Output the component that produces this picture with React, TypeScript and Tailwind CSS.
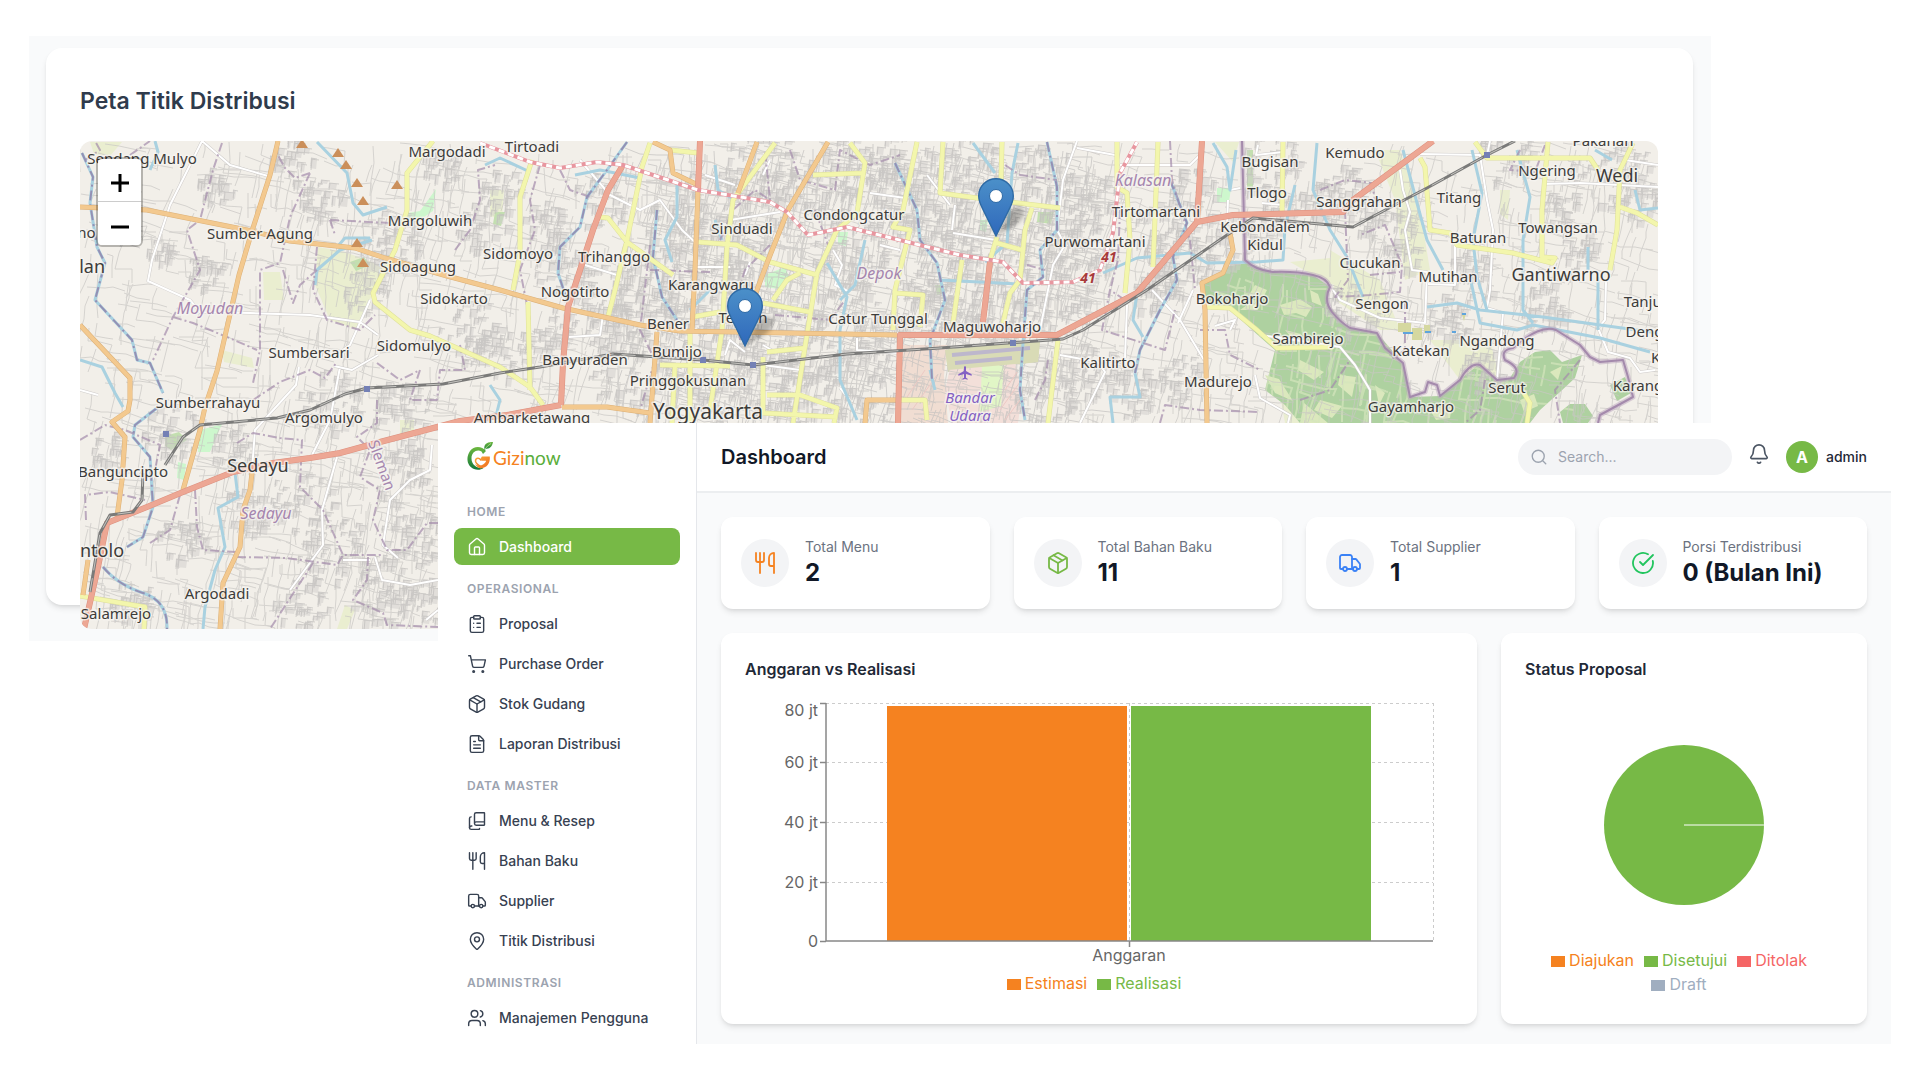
// src/App.tsx
import React from 'react';
import {
  Bell,
  BookCopy,
  CircleCheckBig,
  ClipboardList,
  FileText,
  House,
  MapPin,
  Package,
  Search,
  ShoppingCart,
  Truck,
  Users,
  Utensils,
  type LucideIcon,
} from 'lucide-react';
import { MdLocalAirport } from 'react-icons/md';

/* ---------- Map data ---------- */

type Label = [string, number, number];

const villages: Label[] = [
  ['Sendang Mulyo', 142, 164], ['Sumber Agung', 260, 239], ['Margodadi', 447, 157], ['Margoluwih', 430, 226],
  ['Sidoagung', 418, 272], ['Sidokarto', 454, 304], ['Sumbersari', 309, 358], ['Sidomulyo', 414, 351],
  ['Sumberrahayu', 208, 408], ['Argomulyo', 324, 423], ['Ambarketawang', 532, 423], ['Tirtoadi', 532, 152],
  ['Sinduadi', 742, 234], ['Condongcatur', 854, 220], ['Sidomoyo', 518, 259], ['Trihanggo', 614, 262],
  ['Nogotirto', 575, 297], ['Karangwaru', 711, 290], ['Terban', 743, 323], ['Bener', 668, 329],
  ['Catur Tunggal', 878, 324], ['Banyuraden', 585, 365], ['Bumijo', 677, 357], ['Pringgokusunan', 688, 386],
  ['Tirtomartani', 1156, 217], ['Purwomartani', 1095, 247], ['Maguwoharjo', 992, 332], ['Kalitirto', 1108, 368],
  ['Madurejo', 1218, 387], ['Bokoharjo', 1232, 304], ['Kebondalem', 1265, 232], ['Kidul', 1265, 250],
  ['Tlogo', 1267, 198], ['Bugisan', 1270, 167], ['Kemudo', 1355, 158], ['Sanggrahan', 1359, 207],
  ['Titang', 1459, 203], ['Ngering', 1547, 176], ['Pakahan', 1603, 146], ['Towangsan', 1558, 233],
  ['Baturan', 1478, 243], ['Cucukan', 1370, 268], ['Mutihan', 1448, 282], ['Sengon', 1382, 309],
  ['Sambirejo', 1308, 344], ['Katekan', 1421, 356], ['Ngandong', 1497, 346], ['Serut', 1507, 393],
  ['Gayamharjo', 1411, 412], ['Banguncipto', 123, 477], ['Argodadi', 217, 599], ['Salamrejo', 116, 619],
  ['Tanjung', 1652, 307], ['Dengkeng', 1662, 337], ['Karangasem', 1657, 391], ['Kragilan', 1680, 363], ['Bono', 77, 238],
];

const towns: Label[] = [
  ['Wedi', 1617, 182], ['Gantiwarno', 1561, 281], ['Sedayu', 258, 472], ['Sentolo', 92, 557], ['Nanggulan', 58, 273],
];

const districts: Label[] = [['Moyudan', 210, 314], ['Depok', 879, 279], ['Kalasan', 1143, 186], ['Sedayu', 266, 519]];

const orangeRoads = [
  'M278 141L270 175 252 231 239 275 217 371 205 407 200 430 183 490',
  'M80 207L147 210 252 231 290 241 355 248 385 258 447 276 500 290 563 308 640 325 680 331 897 335',
  'M80 325L130 378 130 400 128 411 112 422 125 437 122 480 117 517',
  'M698 190L695 270 692 330',
  'M757 142L738 193',
  'M828 142L788 210 767 263 747 317',
  'M657 332L650 423',
  'M562 407L607 407 650 413',
  'M653 142L670 150 673 173 698 185',
  'M1230 233L1233 250 1223 273 1202 283 1205 310 1207 423',
  'M865 423L867 400 900 400',
  'M252 473L250 490 243 510 240 547 223 583 220 629',
  'M88 560L83 595',
];

const redRoads = [
  'M84 629L98 567 107 523 147 507 183 492 233 472 273 463 310 458 340 453 380 442 460 421 507 415 561 405',
  'M623 165L608 190 593 230 568 307 563 363 561 405',
  'M700 141L698 190',
  'M898 423L900 335 1057 335 1137 293 1197 222 1233 215 1343 212 1353 200 1433 141',
  'M1202 141L1197 222',
  'M990 262L983 322',
];

const yellowRoads = [
  'M433 141L407 173 407 210 395 250 373 293 375 302 410 330 430 336 500 367 530 387 543 405',
  'M532 160L520 197 520 253 513 290',
  'M528 302L530 390',
  'M650 143L642 167 627 240 615 290 608 317',
  'M600 217L608 218 627 242 673 275',
  'M698 242L737 245 770 262 817 275',
  'M775 143L733 200 727 247 722 330 710 410',
  'M670 150L698 153',
  'M692 317L720 312',
  'M763 303L810 312M773 300L787 280 800 273',
  'M837 230L817 273 805 347 793 423',
  'M850 143L865 163 857 213 837 230M813 175L863 173',
  'M917 142L903 210 893 227 910 230 895 290 893 330M895 293L923 295 920 327',
  'M943 142L940 193 977 198 1060 208',
  'M1002 142L1001 180M997 237L990 260M997 243L1022 250',
  'M1032 208L1025 230 1020 280 1010 293 1003 323',
  'M962 260L953 323',
  'M1117 142L1117 187 1127 193 1130 240 1125 293',
  'M1158 142L1153 267M1283 142L1282 212',
  'M1058 340L1048 423',
  'M1207 307L1230 308 1257 330 1277 348 1333 347',
  'M1420 158L1425 167 1430 230 1450 233 1457 245 1513 253 1552 263 1555 258 1542 257 1542 210 1548 142',
  'M1475 142L1487 158 1590 158 1598 170',
  'M1633 143L1620 170 1617 230 1610 270M1620 207L1637 213 1658 225',
  'M1522 390L1530 403 1527 423',
  'M80 596L145 607 144 629',
  'M660 365L730 366M763 357L763 413 837 417M767 395L800 395 837 408 834 423M767 352L805 348',
  'M900 400L925 400 927 420M690 330L690 423M675 365L672 423',
];

const whiteRoads = [
  'M202 141L170 205 152 260 148 281 190 300 200 312 250 313 310 315 360 322 378 335',
  'M202 141L230 165 268 176',
  'M370 300L350 345 340 352M378 355L352 370 334 366M299 367L296 385 255 430 252 470',
  'M340 367L330 420 312 455M337 457L322 510 323 545 290 590',
  'M580 160L610 195 640 210 660 200 682 230 698 245M585 265L617 275M569 337L600 335 603 315',
  'M705 175L735 185M770 160L763 175M730 220L780 212M697 267L730 267M745 275L750 262',
  'M725 355L730 340 745 352M763 345L775 352M763 365L800 370M857 338L857 350 898 353M840 388L850 400',
  'M870 193L905 198M833 250L842 265 835 285 850 292M880 245L900 250M927 175L950 205',
  'M1077 141L1063 180 1057 230 1065 245 1053 265 1040 330M1060 355L1098 362 1105 372 1080 423',
  'M1077 148L1115 155M1120 165L1190 165 1200 155M953 233L996 240M955 205L952 230',
  'M1127 305L1125 358M1152 290L1180 320 1204 360M1178 323L1193 290',
  'M1258 145L1256 155 1283 152M1283 205L1262 203M1230 190L1240 188M1227 225L1228 200',
  'M1400 170L1403 190 1410 212 1405 230 1412 270 1427 272 1425 323 1380 318 1340 300 1333 290',
  'M1420 154L1480 155 1487 200 1493 230 1490 290 1487 308 1503 313 1497 380',
  'M1455 245L1455 285 1428 284M1490 141L1487 155M1542 184L1580 183 1658 187M1625 160L1658 165',
  'M1606 282L1605 320 1598 328 1608 352 1630 358 1640 372 1655 370',
  'M1230 330L1235 320 1215 326M1260 335L1295 340 1340 347 1355 365 1370 390 1370 423',
  'M1255 375L1260 398 1290 415 1288 423M398 558L383 545 390 500 410 480 430 470 432 445',
  'M375 557L382 580 410 585 438 580M343 560L370 560M426 620L438 610M80 390L98 395',
];

// rivers that carry an administrative border on top
const borderRivers = [
  'M82 153L93 177 90 203 97 247 105 263 95 300 132 340 137 360 150 363 163 393',
  'M157 408L135 425 133 437 150 457 153 507 143 537 127 547M103 567Q118 585 143 593T167 629',
  'M627 142L607 170 587 197 580 227 560 247 558 273 567 300',
  'M657 210L653 257 662 297 677 320',
  'M895 163L917 210 920 240 937 263 945 300 930 340 932 380',
  'M1047 142L1057 187 1057 230 1040 250 1043 277 1027 290 1023 343 1020 390 1025 420',
  'M1170 180L1187 223 1173 257 1177 280 1160 310 1140 350 1135 373',
];

const rivers = [
  'M317 142L347 173 353 203 363 215 387 207',
  'M372 240L340 250 317 270 315 285M370 238L345 238 338 246',
  'M80 360L102 367 115 393 123 407M155 141L158 152 150 170',
  'M235 473L238 497 218 508 225 547 215 570 205 607 203 629',
  'M677 185L677 217 665 240 672 262M575 175L600 170 640 178',
  'M827 263L847 297 840 330 840 380 857 420M865 240L855 285 840 300',
  'M973 143L995 173M1018 143L1012 173 1007 243 985 262M940 280L1020 284',
  'M1103 273L1137 258 1190 253 1207 263 1257 262 1283 260 1285 227 1295 185',
  'M1213 143L1227 167 1230 190 1236 150',
  'M1135 373L1140 397 1110 397 1113 423',
  'M1137 293L1133 320 1143 337M1317 143L1313 190 1330 230 1347 257 1363 297',
  'M1403 150L1417 203 1427 240 1443 270M1472 150L1482 193 1473 240 1477 277 1487 310',
  'M1517 150L1530 197 1523 240 1523 310 1533 323M1427 307L1457 303 1480 310 1543 317 1658 333',
  'M1470 277L1480 323 1517 330 1533 325 1600 338 1650 352M1588 247L1588 270M1598 277L1598 330',
  'M1635 190L1640 210 1658 208M1595 150L1612 160M490 385L500 400 495 420M485 165L500 158 530 172',
  'M715 165L718 190 735 200M715 220L722 240M690 310L710 290M930 370L935 390',
];

const borders = [
  'M222 143L213 170 200 220 187 230 200 270 173 317 153 360',
  'M310 173L290 217 280 263 260 270 260 350 253 383M310 173L295 178 285 168 275 150',
  'M173 317L193 323 227 337 257 350M317 247L313 290 327 320 360 330 375 315',
  'M283 270L293 303 300 285 317 270M330 220L390 223M330 220L335 235',
  'M377 363L400 380 420 370 410 400 437 400 440 370 465 370 460 345M253 400L280 382 310 370 325 378 337 362',
  'M377 400L377 423 357 437 370 450 360 477 380 490 373 520 387 550 407 550 427 523 438 523',
  'M237 443L253 433 280 438 302 440 300 487 323 510 343 555 382 555',
  'M237 557L287 558 337 565 343 555M313 563L270 629M195 490L197 527 203 550 237 552',
  'M368 557L367 580 353 600 383 613 387 625 438 627M80 440L105 425 125 430 160 445 155 470',
  'M86 520L85 495 110 492 145 500M150 543L170 530 180 495M455 250L470 230 480 200 478 170 495 165',
  'M540 165L530 200 535 230 520 270 530 320M560 170L570 190 590 197M650 245L640 330 655 360 640 410',
  'M720 240L733 210 755 190 770 200 765 150M770 245L745 270 735 300 740 340M650 270L710 272',
  'M790 150L800 180 835 190 840 150 870 165 900 155M775 315L830 320 845 300M830 250L815 210',
  'M1005 165L1020 175 1057 180M1125 300L1110 290 1102 330 1165 350 1175 310M1027 265L1045 270',
  'M1170 141L1172 180 1190 240 1195 290M1120 210L1118 260 1110 290M1035 400L1045 380 1048 360',
  'M1200 330L1225 330 1230 355 1260 370M1160 423L1165 405 1200 410 1260 412M1320 190L1345 180 1372 183 1375 200',
  'M1345 210L1348 280 1335 297 1370 295 1400 292 1402 265 1385 225 1360 235M1370 275L1400 272',
  'M1405 300L1405 350 1390 360M1300 400L1330 390 1350 360M1580 360L1555 390 1560 423M1485 380L1480 410 1465 423',
  'M1520 150L1510 170 1535 172 1545 145M85 160L100 150 95 141M130 155L150 141',
];

const ridge =
  'M1242 141L1245 260Q1255 270 1273 272Q1295 271 1313 275Q1327 278 1330 287Q1323 300 1332 312Q1340 322 1350 328L1377 333 1385 348 1403 363 1410 397 1425 392 1428 382 1437 385 1440 396 1460 380Q1470 362 1480 365L1497 380 1514 378Q1522 368 1505 360 1500 350 1513 348Q1540 324 1556 330L1580 345 1590 357 1600 362 1623 360 1628 377 1633 397 1600 415 1598 423';

const forest =
  'M1203 283L1230 266 1247 263 1273 272 1313 275 1330 287 1327 303 1347 327 1377 333 1403 363 1410 397 1440 396 1478 365 1497 380 1510 378 1520 362 1535 352 1550 350 1562 362 1582 355 1575 378 1560 392 1540 410 1530 423 1300 423 1285 405 1265 390 1270 370 1275 350 1260 337 1230 310 1207 303zM1560 412l10 -8 15 0 8 12 -5 7 -25 0zM1610 385l15 -8 6 16 -14 8z';

const railway = [
  'M90 592L100 533 110 515 133 512 142 500 143 473',
  'M165 465L183 437 200 425 277 418 310 410 345 394 367 388 443 384 500 373 540 367 613 354 703 360 753 365 847 354 940 348 1063 339 1083 330 1147 290 1227 235 1253 218 1353 227 1427 188 1487 155 1515 141',
];

const tollRoad =
  'M480 143L530 162 560 168 597 162 623 165 698 190 770 202 787 212 808 235 847 227 960 255 1003 262 1023 283 1073 282 1100 270 1113 233 1120 173 1137 142';

const peaks = [[302, 144], [338, 153], [346, 165], [357, 183], [363, 201], [397, 185], [357, 243], [363, 263]];
const stations = [[367, 389], [166, 434], [703, 360], [753, 365], [1013, 343], [1487, 155]];

// x, y, radius of the built-up areas
const settlements = [
  [290, 160, 14], [215, 185, 12], [320, 200, 14], [388, 240, 20], [365, 290, 14], [205, 270, 12], [160, 250, 8], [480, 225, 16],
  [545, 225, 16], [500, 190, 14], [470, 330, 20], [440, 165, 12], [560, 270, 16], [600, 290, 20], [610, 330, 18], [640, 300, 24],
  [630, 370, 26], [670, 230, 20], [710, 210, 26], [760, 165, 24], [730, 250, 24], [790, 190, 22], [660, 280, 22], [720, 300, 26],
  [700, 350, 30], [740, 390, 32], [800, 380, 34], [790, 340, 28], [850, 320, 26], [850, 250, 24], [880, 200, 28], [930, 210, 26],
  [930, 300, 26], [860, 380, 26], [900, 165, 22], [840, 165, 20], [970, 170, 22], [965, 230, 22], [1040, 170, 20], [1030, 240, 24],
  [970, 290, 24], [1060, 290, 24], [1000, 310, 20], [1090, 200, 18], [1080, 250, 22], [1150, 230, 18], [1190, 190, 16], [1180, 260, 24],
  [1220, 240, 20], [1160, 290, 18], [1090, 370, 18], [1130, 390, 16], [1180, 380, 16], [1045, 390, 20], [1270, 160, 18], [1265, 210, 20],
  [1320, 200, 14], [1385, 225, 18], [1350, 310, 18], [1400, 255, 12], [1500, 150, 20], [1610, 165, 26], [1640, 200, 14], [1560, 205, 12],
  [1470, 275, 16], [1540, 305, 16], [1575, 250, 14], [1445, 315, 16], [1480, 370, 14], [1345, 190, 16], [170, 430, 18], [230, 445, 14],
  [300, 500, 20], [240, 510, 16], [330, 545, 22], [400, 470, 22], [410, 540, 20], [330, 400, 20], [400, 410, 20], [180, 540, 16],
  [130, 600, 14], [300, 600, 18], [110, 450, 12], [380, 590, 22], [420, 600, 16], [500, 350, 18], [550, 330, 18], [600, 200, 18],
];

const randomFrom = (seed: number) => () => {
  seed = (seed * 1664525 + 1013904223) % 4294967296;
  return seed / 4294967296;
};

// Loose lanes that wander in two main directions
const lanes = (seed: number, x0: number, x1: number, y0: number, y1: number, count: number) => {
  const rnd = randomFrom(seed);
  let d = '';
  for (let i = 0; i < count; i++) {
    let x = x0 + rnd() * (x1 - x0);
    let y = y0 + rnd() * (y1 - y0);
    let angle = rnd() > 0.42 ? 1.74 : 0.17;
    d += `M${x.toFixed(0)} ${y.toFixed(0)}`;
    const steps = 2 + Math.floor(rnd() * 4);
    for (let s = 0; s < steps; s++) {
      const bend = angle + (rnd() - 0.5) * 0.5;
      const len = 6 + rnd() * 12;
      x += Math.cos(bend) * len;
      y += Math.sin(bend) * len;
      d += `L${x.toFixed(0)} ${y.toFixed(0)}`;
      if (rnd() > 0.75) angle = 1.91 - angle;
    }
  }
  return d;
};

const blocks = () => {
  const rnd = randomFrom(77);
  let fill = '';
  let grid = '';
  settlements.forEach(([cx, cy, r]) => {
    for (let i = 0; i < r * 2; i++) {
      const a = rnd() * 6.28;
      const dist = Math.sqrt(rnd()) * r * 1.6;
      const x = Math.round(cx + Math.cos(a) * dist);
      const y = Math.round(cy + Math.sin(a) * dist);
      const w = 3 + Math.round(rnd() * 6);
      const h = 3 + Math.round(rnd() * 6);
      fill += `M${x} ${y}l${w} 1l-1 ${h}l${-w} -1z`;
      grid += `M${x} ${y}l${w + 2} 1M${x + 1} ${y}l-1 ${h + 2}`;
    }
  });
  return { fill, grid };
};

const laneShapes = lanes(11, 80, 1658, 141, 423, 1500) + lanes(53, 80, 438, 423, 629, 330);
const denseLanes = lanes(29, 620, 1090, 141, 423, 700);
const forestLanes = lanes(91, 1210, 1560, 270, 420, 120);
const settlementShapes = blocks();

const Lines: React.FC<{ paths: string[]; color: string; width: number; dash?: string; opacity?: number }> = ({
  paths,
  color,
  width,
  dash,
  opacity,
}) => (
  <path
    d={paths.join('')}
    fill="none"
    stroke={color}
    strokeWidth={width}
    strokeDasharray={dash}
    strokeLinejoin="round"
    opacity={opacity}
  />
);

const Marker: React.FC<{ x: number; y: number }> = ({ x, y }) => (
  <g transform={`translate(${x - 18} ${y - 59})`}>
    <path d="M18 58L30 34Q40 24 46 32Q48 40 36 48Z" fill="#000" opacity="0.25" filter="url(#markerShadow)" />
    <path
      d="M18 .7C8.300.7.7 8.300.7 18c0 5 2 9 4 13L18 58l13.300-27c2-4 4-8 4-13C35.300 8.300 27.700.7 18 .7z"
      fill="url(#markerFill)"
      stroke="#2e6aa5"
      strokeWidth="1.4"
    />
    <circle cx="18" cy="18" r="6.500" fill="#fff" stroke="#2e6aa5" strokeWidth="1" />
  </g>
);

const DistributionMap: React.FC = () => (
  <svg
    viewBox="80 141 1578 488"
    preserveAspectRatio="xMinYMin slice"
    className="block h-full w-full font-['Noto_Sans',sans-serif]"
    role="img"
    aria-label="Peta"
  >
    <defs>
      <linearGradient id="markerFill" x1="0" y1="0" x2="0" y2="1">
        <stop offset="0" stopColor="#4b90c9" />
        <stop offset="1" stopColor="#2f68bb" />
      </linearGradient>
      <filter id="markerShadow" x="-30%" y="-30%" width="160%" height="160%">
        <feGaussianBlur stdDeviation="2" />
      </filter>
      <clipPath id="forestArea">
        <path d={forest} />
      </clipPath>
    </defs>
    <rect x="80" y="141" width="1578" height="488" fill="#f2efe9" />

    {/* fields */}
    <path
      d="M318 247L345 252 372 262 385 270 372 295 358 330 330 320 315 285zM263 272l17 0 4 28 -20 0zM222 350l30 8 2 10 -30 -6zM90 142l32 0 -12 14 -16 -2zM1215 142h24l-6 20zM1375 150l25 0 20 60 10 60 -25 10 -10 -80zM1330 250l50 30 20 50 -20 0 -45 -30zM1430 340l60 0 10 40 -40 0zM1290 262l40 -4 15 30 -20 -6zM345 605l10 5 -8 19 -10 0zM400 420l14 0 0 14 -14 0zM1500 190l10 0 -2 30 -8 -6zM490 190l14 0 -2 30 -12 -4zM1280 395l25 10 10 18 -30 0z"
      fill="#eaeed0"
    />
    <path
      d="M408 213l12 -2 16 -22 -3 22 -12 8 -13 0zM200 430l22 -6 -12 28 -12 0zM178 462l8 2 -2 16 -7 -2zM765 275l20 -8 6 14 -12 8 -14 -2zM838 232l10 0 -2 14 -8 -2zM1217 188l14 0 -2 14 -12 0zM980 220l8 0 -2 12 -6 -2z"
      fill="#cdf7cd"
    />
    <path d="M165 436l14 -4 8 8 -16 10 -6 -4zM350 262l14 -5 6 8 -14 6zM495 212l10 0 -4 14 -8 -2zM1038 212l16 0 -3 12 -14 -2zM935 285l8 0 2 8 -8 2zM1247 150l6 0 0 40 -6 0z" fill="#c3dfb0" />
    <path d={forest} fill="#aed1a0" />
    <path
      d="M1255 285l12 5 -4 8 -14 -3zM1280 305l20 -6 12 8 -6 10 -10 -4 -12 2zM1310 290l8 4 4 12 -10 -4zM1285 330l16 4 -6 8zM1265 375l14 4 14 22 -18 -8zM1300 360l24 12 -10 8 -16 -10zM1340 375l16 2 -4 20 -14 -12zM1375 385l10 8 -6 12zM1320 400l22 6 -10 12 -18 -8zM1430 410l22 -6 -2 14 -14 2zM1300 423l4 -20 24 20zM1520 400l14 -6 4 12 -14 6zM1240 310l14 -10 4 10zM1550 372l12 -6 -4 14z"
      fill="#dbe8bd"
    />
    <path d={forestLanes} fill="none" stroke="#d4e6bc" strokeWidth="2" clipPath="url(#forestArea)" opacity="0.7" />

    {/* airport */}
    <path d="M945 348L1040 340 1038 362 948 372z" fill="#d9dbb6" />
    <path d="M900 345l48 0 -4 30 4 48 -48 0z" fill="#f0ddd2" />
    <path d="M950 368L1015 362 1022 395 1018 423 952 423 945 390z" fill="#f3dfd9" />
    <path d="M982 366l22 -2 -3 42 -21 6z" fill="#e1f6c6" />

    {/* streets */}
    <path d={settlementShapes.fill} fill="#d0cecc" opacity="0.5" />
    <g fill="none" opacity="0.7">
      <path d={laneShapes} stroke="#c9c7c4" />
      <path d={denseLanes} stroke="#c3c1bf" />
      <path d={settlementShapes.grid} stroke="#c0bebc" />
    </g>

    <path d="M945 350L1040 341 1038 362 948 370z" fill="#d9dbb6" />
    <path d="M952 355L1030 348M955 363L1012 358" stroke="#bdb7cc" strokeWidth="4" />
    <path d="M1005 390l12 -18M1000 410l20 -28M1005 420l15 -20M905 400l20 -30M912 410l25 -35" stroke="#ecc9c4" fill="none" />

    <Lines paths={whiteRoads} color="#cfccca" width={3} />
    <Lines paths={whiteRoads} color="#ffffff" width={2} />
    <Lines paths={[...rivers, ...borderRivers]} color="#a9d1e0" width={3} />
    <Lines paths={borders} color="#a48bab" width={2} dash="9 3 2 3" opacity={0.7} />
    <Lines paths={borderRivers} color="#9490b4" width={2} dash="10 4 2 4" />
    <Lines paths={[ridge]} color="#b9a3bd" width={5} opacity={0.5} />
    <Lines paths={[ridge]} color="#a48aac" width={2} />

    <Lines paths={yellowRoads} color="#dedf9c" width={5} />
    <Lines paths={yellowRoads} color="#f3f6ac" width={4} />
    <Lines paths={orangeRoads} color="#dcb077" width={5} />
    <Lines paths={orangeRoads} color="#f3c98f" width={4} />
    <Lines paths={redRoads} color="#dd907f" width={6} />
    <Lines paths={redRoads} color="#eda794" width={5} />
    <Lines paths={[tollRoad]} color="#e8969f" width={4} />
    <Lines paths={[tollRoad]} color="#ffffff" width={3} dash="6 4" />
    <Lines paths={railway} color="#7a7a79" width={3} />
    <Lines paths={railway} color="#c4c3bf" width={1} dash="14 8" />

    {stations.map(([x, y]) => (
      <rect key={x} x={x - 3} y={y - 3} width="6" height="6" fill="#7480b5" />
    ))}
    {peaks.map(([x, y]) => (
      <path key={`${x}-${y}`} d={`M${x} ${y - 5}l6 9h-12z`} fill="#cb8f5a" />
    ))}
    <path d="M1398 323h13v9h-13zM1412 328h10v12h-10zM1424 325h6v8h-6zM1462 315l4 -2 -2 8z" fill="#d5d8a0" />
    <path d="M1403 333h10M1425 332h6M1452 332h4M1462 314h4" stroke="#5fa4dc" strokeWidth="2" />
    <MdLocalAirport x={957} y={365} width={25} height={25} color="#8461c4" />

    <g textAnchor="middle" fill="#3d3c3a" stroke="#f7f5f1" strokeOpacity="0.75" strokeWidth="3" strokeLinejoin="round" paintOrder="stroke">
      <g fontSize="15">
        {villages.map(([name, x, y]) => (
          <text key={name} x={x} y={y}>{name}</text>
        ))}
      </g>
      <g fontSize="18">
        {towns.map(([name, x, y]) => (
          <text key={name} x={x} y={y}>{name}</text>
        ))}
      </g>
      <text x="708" y="419" fontSize="21">Yogyakarta</text>
      <g fontSize="16" fontStyle="italic" fill="#a585ae">
        {districts.map(([name, x, y]) => (
          <text key={name} x={x} y={y}>{name}</text>
        ))}
      </g>
      <text fontSize="15" fill="#a585ae" transform="translate(377 467) rotate(70)">Sleman</text>
      <g fontSize="15" fontStyle="italic" fill="#8461c4">
        <text x="970" y="403">Bandar</text>
        <text x="970" y="421">Udara</text>
      </g>
      <g fontSize="14" fontStyle="italic" fontWeight="700" fill="#a83a3a">
        <text x="1109" y="262">41</text>
        <text x="1088" y="283">41</text>
      </g>
    </g>

    <Marker x={996} y={237} />
    <Marker x={745} y={347} />
  </svg>
);

const MapPanel: React.FC = () => (
  <section className="col-start-1 row-start-1 mt-9 mr-[209px] ml-[29px] h-[605px] self-start bg-[#f9fafb] pt-3 pr-[18px] pl-[17px]">
    <div className="h-[557px] rounded-2xl bg-white pt-[37px] pr-[35px] pl-[34px] shadow-md">
      <h2 className="text-[23px] leading-8 font-semibold text-[#2f3b4c]">Peta Titik Distribusi</h2>
      <div className="relative mt-6 h-[488px] overflow-hidden rounded-xl">
        <DistributionMap />
        <div className="absolute top-4 left-4 flex flex-col overflow-hidden rounded-md border-2 border-black/25 bg-clip-padding">
          <button type="button" aria-label="Perbesar" className="flex h-[43px] w-[43px] items-center justify-center border-b border-[#cccccc] bg-white pt-[6px]">
            <svg viewBox="0 0 18 18" className="size-[18px]" stroke="#000" strokeWidth="3">
              <path d="M0 9h18M9 0v18" />
            </svg>
          </button>
          <button type="button" aria-label="Perkecil" className="flex h-[43px] w-[43px] items-center justify-center bg-white pt-[6px]">
            <svg viewBox="0 0 18 18" className="size-[18px]" stroke="#000" strokeWidth="3">
              <path d="M0 9h18" />
            </svg>
          </button>
        </div>
      </div>
    </div>
  </section>
);

/* ---------- Sidebar ---------- */

type NavItem = { label: string; icon: LucideIcon; active?: boolean };

const navGroups: { title: string; items: NavItem[] }[] = [
  { title: 'HOME', items: [{ label: 'Dashboard', icon: House, active: true }] },
  {
    title: 'OPERASIONAL',
    items: [
      { label: 'Proposal', icon: ClipboardList },
      { label: 'Purchase Order', icon: ShoppingCart },
      { label: 'Stok Gudang', icon: Package },
      { label: 'Laporan Distribusi', icon: FileText },
    ],
  },
  {
    title: 'DATA MASTER',
    items: [
      { label: 'Menu & Resep', icon: BookCopy },
      { label: 'Bahan Baku', icon: Utensils },
      { label: 'Supplier', icon: Truck },
      { label: 'Titik Distribusi', icon: MapPin },
    ],
  },
  { title: 'ADMINISTRASI', items: [{ label: 'Manajemen Pengguna', icon: Users }] },
];

const Logo: React.FC = () => (
  <a href="#" className="flex items-center">
    <svg viewBox="0 0 26 30" className="h-[30px] w-[26px]" fill="none">
      <defs>
        <linearGradient id="logoGreen" x1="0" y1="0" x2="0" y2="1">
          <stop offset="0" stopColor="#6db83f" />
          <stop offset="1" stopColor="#14793a" />
        </linearGradient>
        <linearGradient id="logoOrange" x1="0" y1="0" x2="1" y2="1">
          <stop offset="0" stopColor="#fbab3b" />
          <stop offset="1" stopColor="#ee6a1c" />
        </linearGradient>
      </defs>
      <path d="M19 10C15 5 7 4.500 3 10C-1.500 16.500 0 25 7 28C10 29.300 14 29 16.500 27C10 27.500 4.500 24 4.500 17.500C4.500 11 10 8 14.500 10.500L16 13z" fill="url(#logoGreen)" />
      <path d="M14 19.500C13 16.500 8.500 16.500 8.500 20C8.500 22.500 12 24.500 13.500 25.500" stroke="url(#logoOrange)" strokeWidth="1.500" />
      <path d="M15 15.500H22.800C23.500 22 20 27 13.500 27.500C11 26.800 9 25 8 23C11 25 14 25 16 23.500C18 22.300 19 21 19 19.800H14.500C13.500 18 14 16.500 15 15.500z" fill="url(#logoOrange)" />
      <path d="M17.500 8C16.500 3.500 20 .5 26 1C25.500 5 22.500 8.500 18.500 7.500L17.800 10z" fill="url(#logoGreen)" />
      <path d="M18 8Q20.500 4.500 24 2.500" stroke="#cfe8a8" strokeWidth="0.7" />
    </svg>
    <span className="mt-1 font-['Lato',sans-serif] text-[19px] leading-6 text-[#f58220]">
      Gizi<span className="text-[#5aae3b]">now</span>
    </span>
  </a>
);

const Sidebar: React.FC = () => (
  <aside className="w-[259px] shrink-0 border-r border-[#e5e7eb] bg-white">
    <div className="flex h-[66px] items-center px-[29px]">
      <Logo />
    </div>
    <nav className="flex flex-col gap-4 px-4 pt-[15px] pb-2">
      {navGroups.map((group) => (
        <div key={group.title}>
          <h3 className="mb-2 px-[13px] text-xs leading-4 font-semibold tracking-wider text-[#9ca3af]">{group.title}</h3>
          <ul className="flex flex-col gap-[3px]">
            {group.items.map(({ label, icon: Icon, active }) => (
              <li key={label}>
                <a
                  href="#"
                  className={`flex h-[37px] items-center gap-3 rounded-lg px-[13px] text-sm font-medium ${
                    active ? 'bg-[#77b946] text-white' : 'text-[#374151]'
                  }`}
                >
                  <Icon className="size-5" strokeWidth={1.7} />
                  {label}
                </a>
              </li>
            ))}
          </ul>
        </div>
      ))}
    </nav>
  </aside>
);

/* ---------- Dashboard ---------- */

const stats = [
  { label: 'Total Menu', value: '2', icon: Utensils, color: 'text-[#f58220]' },
  { label: 'Total Bahan Baku', value: '11', icon: Package, color: 'text-[#77b946]' },
  { label: 'Total Supplier', value: '1', icon: Truck, color: 'text-[#3b82f6]' },
  { label: 'Porsi Terdistribusi', value: '0 (Bulan Ini)', icon: CircleCheckBig, color: 'text-[#22c55e]' },
];

const budgetLegend = [
  { label: 'Estimasi', text: 'text-[#f58220]', box: 'bg-[#f58220]' },
  { label: 'Realisasi', text: 'text-[#77b946]', box: 'bg-[#77b946]' },
];

const statusLegend = [
  { label: 'Diajukan', text: 'text-[#f58220]', box: 'bg-[#f58220]' },
  { label: 'Disetujui', text: 'text-[#77b946]', box: 'bg-[#77b946]' },
  { label: 'Ditolak', text: 'text-[#f56565]', box: 'bg-[#f56565]' },
  { label: 'Draft', text: 'text-[#a0aec0]', box: 'bg-[#a0aec0]' },
];

const ticks = [
  { label: '80 jt', y: 6, textY: 19 },
  { label: '60 jt', y: 65, textY: 71 },
  { label: '40 jt', y: 125, textY: 131 },
  { label: '20 jt', y: 185, textY: 191 },
  { label: '0', y: 244, textY: 250 },
];

const Legend: React.FC<{ items: typeof statusLegend }> = ({ items }) => (
  <ul className="flex flex-wrap justify-center text-base leading-6">
    {items.map((item) => (
      <li key={item.label} className={`mr-[10px] flex items-center gap-1 ${item.text}`}>
        <span className={`mt-[3px] h-[11px] w-[14px] ${item.box}`} />
        {item.label}
      </li>
    ))}
  </ul>
);

const BudgetChart: React.FC = () => (
  <svg viewBox="0 0 708 270" className="block w-full" fontSize="16" fill="#666">
    <g stroke="#ccc" strokeDasharray="3 3" fill="none">
      {ticks.slice(0, 4).map((tick) => (
        <path key={tick.label} d={`M81 ${tick.y + 0.5}H688`} />
      ))}
      <path d="M384.500 6V244M688.500 6V244" />
    </g>
    <rect x="142" y="9" width="240" height="235" fill="#f58220" />
    <rect x="386" y="9" width="240" height="235" fill="#77b946" />
    <path d="M81 6V244M81 244H688M384.500 244v6" stroke="#888" strokeWidth="1.500" />
    {ticks.map((tick) => (
      <g key={tick.label}>
        <path d={`M75 ${tick.y + 0.5}h6`} stroke="#888" strokeWidth="1.500" />
        <text x="73" y={tick.textY} textAnchor="end">{tick.label}</text>
      </g>
    ))}
    <text x="384" y="264" textAnchor="middle">Anggaran</text>
  </svg>
);

const Header: React.FC = () => (
  <header className="flex h-[70px] items-center border-b-2 border-[#eceef0] bg-white px-6">
    <h1 className="text-xl font-semibold text-[#111827]">Dashboard</h1>
    <div className="ml-auto flex items-center gap-4">
      <label className="flex h-9 w-[214px] items-center gap-[10px] rounded-full bg-[#f3f4f6] px-3 text-[#9ca3af]">
        <Search className="size-[18px] shrink-0" strokeWidth={1.8} />
        <input
          type="text"
          aria-label="Search"
          placeholder="Search..."
          className="w-full min-w-0 bg-transparent text-sm outline-none placeholder:text-[#9ca3af]"
        />
      </label>
      <button type="button" aria-label="Notifikasi" className="pb-[7px] text-[#4b5563]">
        <Bell className="size-[22px]" strokeWidth={1.8} />
      </button>
      <div className="flex items-center gap-2">
        <span className="flex size-8 items-center justify-center rounded-full bg-[#77b946] text-base font-bold text-white">A</span>
        <span className="text-sm font-medium text-[#1f2937]">admin</span>
      </div>
    </div>
  </header>
);

const Dashboard: React.FC = () => (
  <section className="relative z-10 col-start-1 row-start-1 mt-[423px] mr-[29px] mb-9 ml-[438px] flex self-start bg-[#f9fafb]">
    <Sidebar />
    <div className="min-w-0 flex-1">
      <Header />
      <main className="flex flex-col gap-6 px-6 pt-6 pb-5">
        <div className="grid grid-cols-4 gap-6">
          {stats.map(({ label, value, icon: Icon, color }) => (
            <div key={label} className="flex items-center gap-4 rounded-xl bg-white p-5 shadow-md">
              <div className={`flex size-12 items-center justify-center rounded-full bg-[#f3f4f6] ${color}`}>
                <Icon className="size-6" strokeWidth={1.8} />
              </div>
              <div>
                <p className="text-sm leading-5 text-[#6b7280]">{label}</p>
                <p className="text-2xl leading-8 font-bold text-[#111827]">{value}</p>
              </div>
            </div>
          ))}
        </div>
        <div className="grid grid-cols-3 gap-6">
          <div className="col-span-2 rounded-xl bg-white p-6 pb-7 shadow-md">
            <h2 className="mb-4 text-base leading-6 font-semibold text-[#1f2937]">Anggaran vs Realisasi</h2>
            <BudgetChart />
            <div className="mt-1">
              <Legend items={budgetLegend} />
            </div>
          </div>
          <div className="rounded-xl bg-white p-6 pb-7 shadow-md">
            <h2 className="mb-4 text-base leading-6 font-semibold text-[#1f2937]">Status Proposal</h2>
            <svg viewBox="0 0 318 251" className="block w-full">
              <circle cx="159" cy="128" r="80" fill="#77b946" />
              <path d="M159 128H240" stroke="#fff" strokeWidth="1" />
            </svg>
            <Legend items={statusLegend} />
          </div>
        </div>
      </main>
    </div>
  </section>
);

const App: React.FC = () => {
  return (
    <div className="grid min-h-screen overflow-hidden bg-white font-['Inter',sans-serif]">
      <MapPanel />
      <Dashboard />
    </div>
  );
};

export default App;
